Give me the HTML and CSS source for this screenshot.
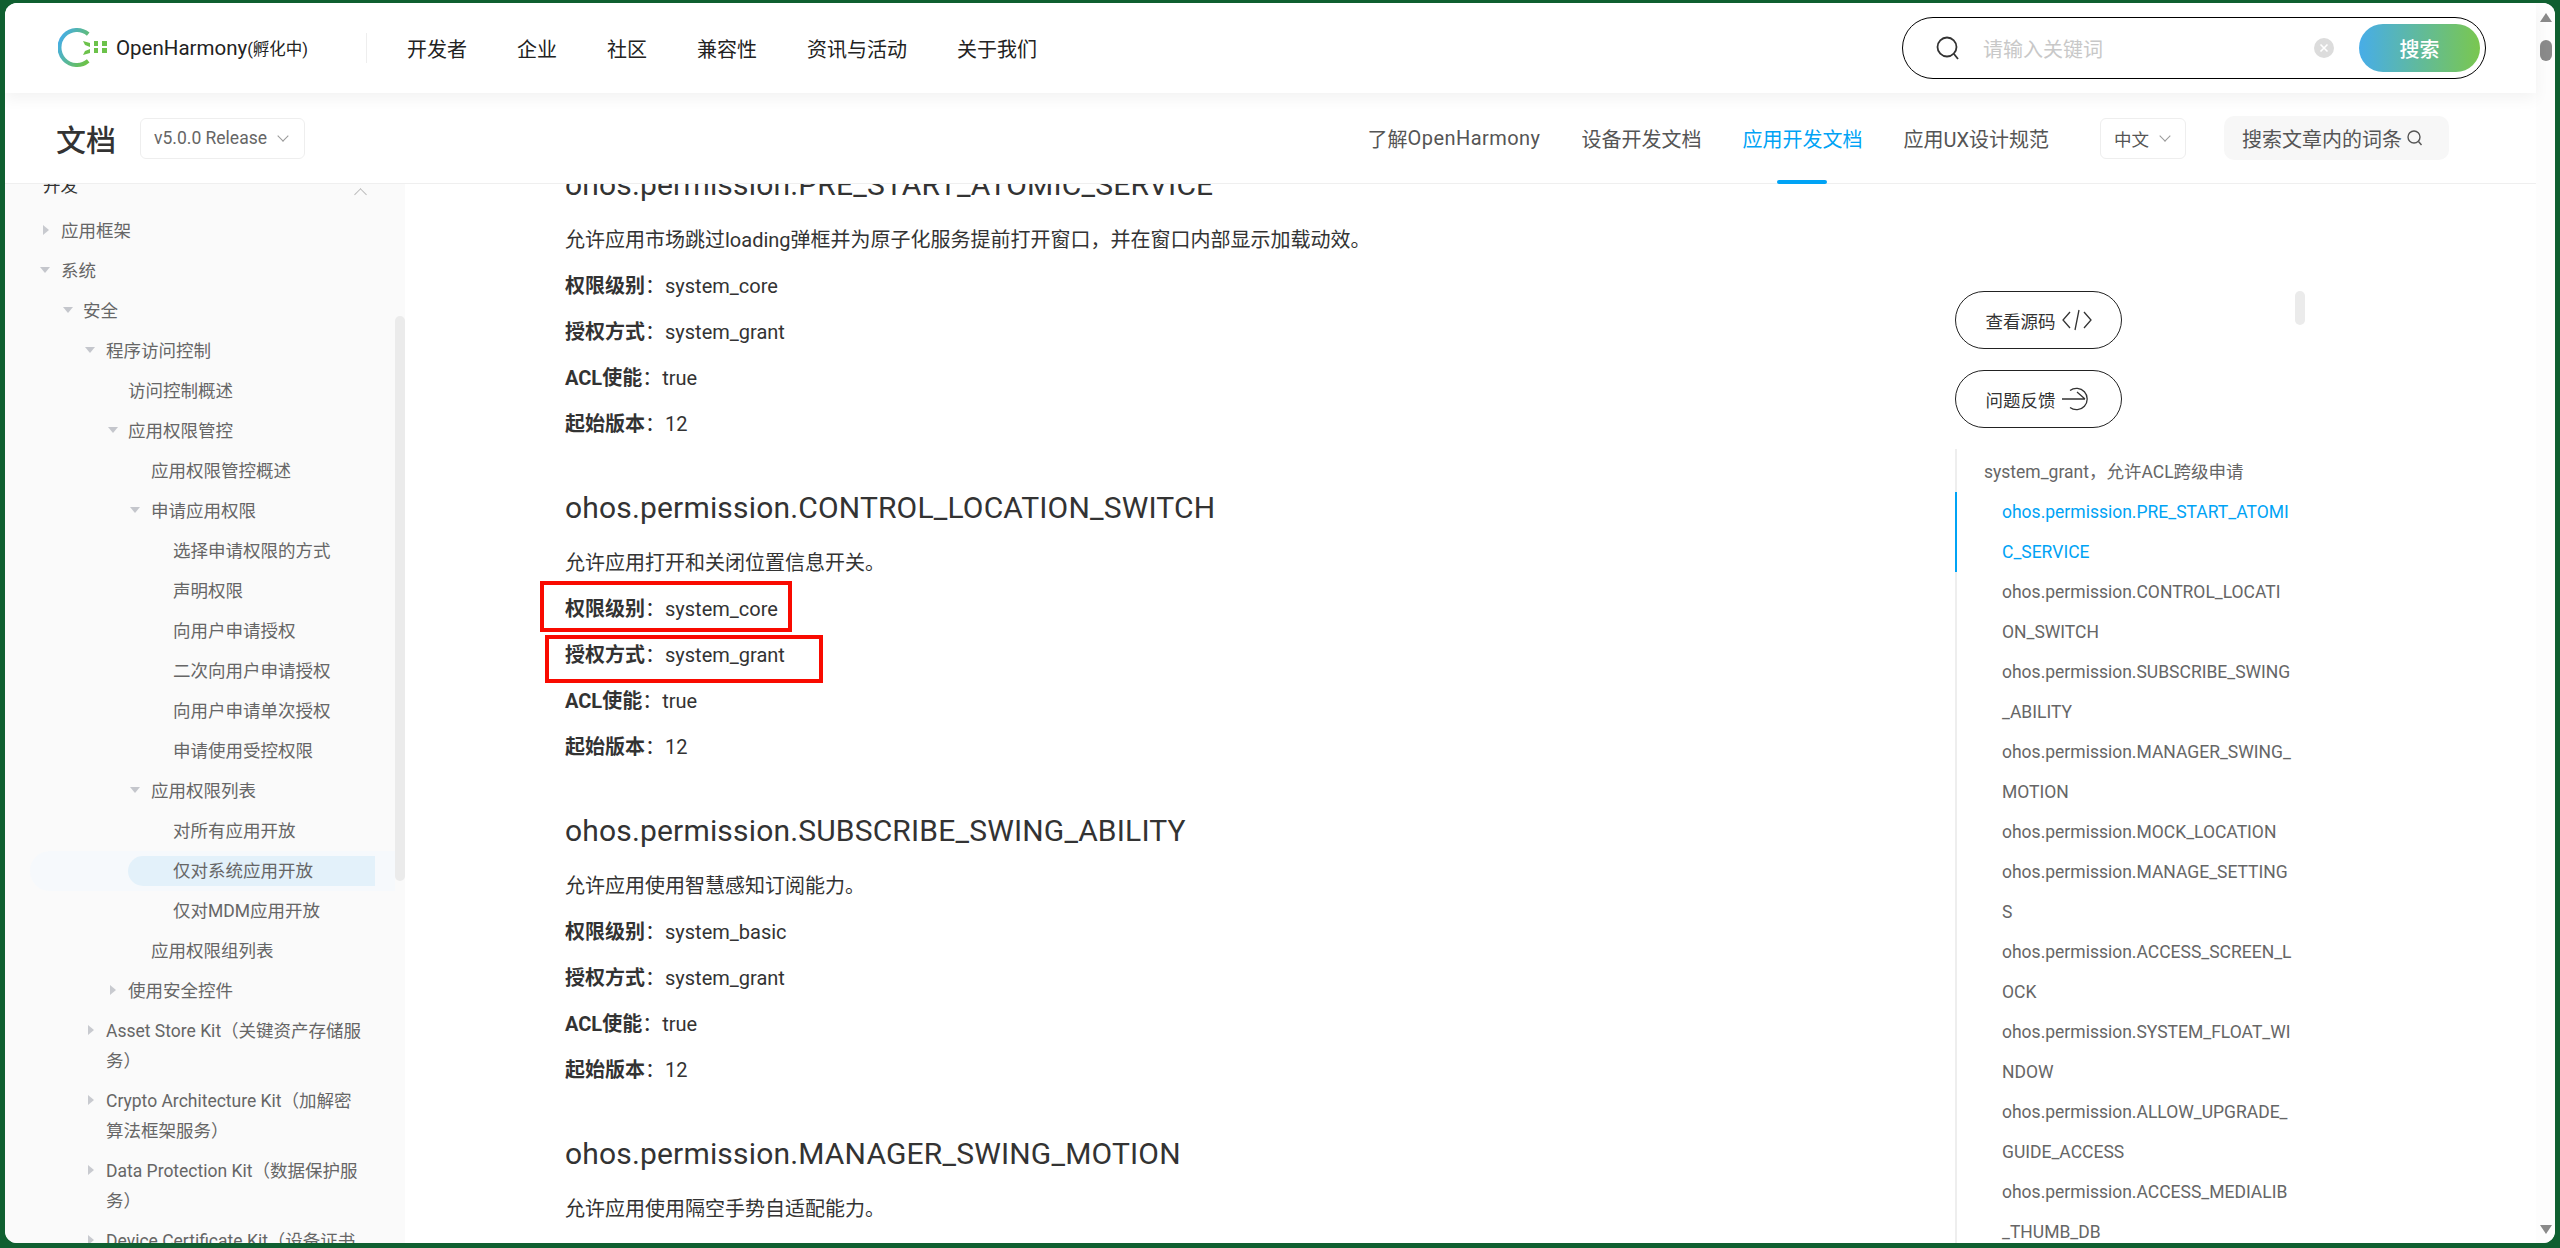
FILE: index.html
```html
<!DOCTYPE html>
<html lang="zh-CN">
<head>
<meta charset="utf-8">
<title>OpenHarmony 文档</title>
<link rel="stylesheet" href="styles.css">
</head>
<body>
<div class="window">
  <div class="page">
    <header class="topbar">
      <a class="logo">
        <svg class="logo-mark" width="50" height="42" viewBox="0 0 50 42">
          <defs>
            <linearGradient id="ring" x1="0" y1="0.2" x2="1" y2="0.8">
              <stop offset="0" stop-color="#45ade8"/>
              <stop offset="1" stop-color="#6cc24a"/>
            </linearGradient>
          </defs>
          <path d="M30.200 7.100A17.500 17.500 0 1 0 30.200 33.900" fill="none" stroke="url(#ring)" stroke-width="4"/>
          <path d="M25 14l7 2v4l-5-2z M25 28l7-2v-4l-5 2z" fill="#6cc24a"/>
          <path d="M36 14h4v5h-4z M36 21h4v5h-4z M44 14h5v5h-5z M44 21h5v5h-5z" fill="#6cc24a"/>
        </svg>
        <span class="logo-text">OpenHarmony<span class="logo-sub">(孵化中)</span></span>
      </a>
      <nav class="mainnav">
        <a>开发者</a><a>企业</a><a>社区</a><a>兼容性</a><a>资讯与活动</a><a>关于我们</a>
      </nav>
      <form class="searchbox">
        <svg class="search-icon" width="26" height="26" viewBox="0 0 26 26"><circle cx="12" cy="12" r="9.500" fill="none" stroke="#333" stroke-width="1.800"/><path d="M19 19l4 5" stroke="#333" stroke-width="1.800" fill="none"/></svg>
        <span class="placeholder">请输入关键词</span>
        <svg class="clear-icon" width="20" height="20" viewBox="0 0 20 20"><circle cx="10" cy="10" r="10" fill="#dcdcdc"/><path d="M6.500 6.500l7 7M13.500 6.500l-7 7" stroke="#fff" stroke-width="1.600"/></svg>
        <span class="search-btn">搜索</span>
      </form>
    </header>
    <div class="docbar">
      <h1 class="doc-title">文档</h1>
      <div class="select select-version">v5.0.0 Release<i class="chev"></i></div>
      <nav class="docnav">
        <a>了解<span class="latin">OpenHarmony</span></a><a>设备开发文档</a><a class="on">应用开发文档</a><a>应用UX设计规范</a>
      </nav>
      <div class="select select-lang">中文<i class="chev"></i></div>
      <div class="wordsearch">搜索文章内的词条<svg width="18" height="18" viewBox="0 0 18 18"><circle cx="8" cy="8" r="6" fill="none" stroke="#555" stroke-width="1.400"/><path d="M12.500 12.500l3 3.500" stroke="#555" stroke-width="1.400"/></svg></div>
    </div>
    <div class="content">
      <aside class="sidebar">
        <ul class="tree">
          <li class="row root">开发<i class="caret-up"></i></li>
          <li class="row l0 closed">应用框架</li>
          <li class="row l0 open">系统</li>
          <li class="row l1 open">安全</li>
          <li class="row l2 open">程序访问控制</li>
          <li class="row l3">访问控制概述</li>
          <li class="row l3 open">应用权限管控</li>
          <li class="row l4">应用权限管控概述</li>
          <li class="row l4 open">申请应用权限</li>
          <li class="row l5">选择申请权限的方式</li>
          <li class="row l5">声明权限</li>
          <li class="row l5">向用户申请授权</li>
          <li class="row l5">二次向用户申请授权</li>
          <li class="row l5">向用户申请单次授权</li>
          <li class="row l5">申请使用受控权限</li>
          <li class="row l4 open">应用权限列表</li>
          <li class="row l5">对所有应用开放</li>
          <li class="row l5 current"><span>仅对系统应用开放</span></li>
          <li class="row l5">仅对MDM应用开放</li>
          <li class="row l4">应用权限组列表</li>
          <li class="row l3 closed">使用安全控件</li>
          <li class="row l2 closed">Asset Store Kit（关键资产存储服务）</li>
          <li class="row l2 closed">Crypto Architecture Kit（加解密算法框架服务）</li>
          <li class="row l2 closed">Data Protection Kit（数据保护服务）</li>
          <li class="row l2 closed">Device Certificate Kit（设备证书服务）</li>
        </ul>
        <div class="side-thumb"></div>
      </aside>
      <main class="article">
        <section class="perm first">
          <h3>ohos.permission.PRE_START_ATOMIC_SERVICE</h3>
          <p>允许应用市场跳过loading弹框并为原子化服务提前打开窗口，并在窗口内部显示加载动效。</p>
          <p><b>权限级别</b>：system_core</p>
          <p><b>授权方式</b>：system_grant</p>
          <p><b>ACL使能</b>：true</p>
          <p><b>起始版本</b>：12</p>
        </section>
        <section class="perm">
          <h3>ohos.permission.CONTROL_LOCATION_SWITCH</h3>
          <p>允许应用打开和关闭位置信息开关。</p>
          <p><b>权限级别</b>：system_core</p>
          <p><b>授权方式</b>：system_grant</p>
          <p><b>ACL使能</b>：true</p>
          <p><b>起始版本</b>：12</p>
        </section>
        <section class="perm">
          <h3>ohos.permission.SUBSCRIBE_SWING_ABILITY</h3>
          <p>允许应用使用智慧感知订阅能力。</p>
          <p><b>权限级别</b>：system_basic</p>
          <p><b>授权方式</b>：system_grant</p>
          <p><b>ACL使能</b>：true</p>
          <p><b>起始版本</b>：12</p>
        </section>
        <section class="perm">
          <h3>ohos.permission.MANAGER_SWING_MOTION</h3>
          <p>允许应用使用隔空手势自适配能力。</p>
        </section>
        <div class="redbox box-a"></div>
        <div class="redbox box-b"></div>
      </main>
      <aside class="outline">
        <a class="pill">查看源码<svg width="30" height="24" viewBox="0 0 30 24"><path d="M8 4l-7 8 7 8M22 4l7 8-7 8M17 2l-4 20" fill="none" stroke="#333" stroke-width="1.300"/></svg></a>
        <a class="pill">问题反馈<svg width="30" height="24" viewBox="0 0 30 24"><path d="M8 3.500A10.700 10.700 0 1 1 8 20.500M0 12h23M15 5l8 7" fill="none" stroke="#333" stroke-width="1.300"/></svg></a>
        <ul class="toc">
          <li class="toc-group">system_grant，允许ACL跨级申请</li>
          <li class="toc-item on">ohos.permission.PRE_START_ATOMIC_SERVICE</li>
          <li class="toc-item">ohos.permission.CONTROL_LOCATI<br>ON_SWITCH</li>
          <li class="toc-item">ohos.permission.SUBSCRIBE_SWING_ABILITY</li>
          <li class="toc-item">ohos.permission.MANAGER_SWING_MOTION</li>
          <li class="toc-item">ohos.permission.MOCK_LOCATION</li>
          <li class="toc-item">ohos.permission.MANAGE_SETTINGS</li>
          <li class="toc-item">ohos.permission.ACCESS_SCREEN_LOCK</li>
          <li class="toc-item">ohos.permission.SYSTEM_FLOAT_WINDOW</li>
          <li class="toc-item">ohos.permission.ALLOW_UPGRADE_GUIDE_ACCESS</li>
          <li class="toc-item">ohos.permission.ACCESS_MEDIALIB_THUMB_DB</li>
        </ul>
        <div class="toc-thumb"></div>
      </aside>
    </div>
  </div>
  <div class="page-scroll">
    <i class="arrow-up"></i>
    <i class="page-thumb"></i>
    <i class="arrow-down"></i>
  </div>
</div>
</body>
</html>
```
FILE: styles.css
```css
* { box-sizing: border-box; }
html, body { height: 100%; }
body {
  margin: 0;
  background: #0f5f30;
  padding: 3px 5px 5px;
  overflow: hidden;
  font-family: Roboto, "Noto Sans CJK SC", sans-serif;
  color: #333;
}
ul { list-style: none; margin: 0; padding: 0; }
a { color: inherit; text-decoration: none; }
.window {
  display: flex;
  height: 1240px;
  background: #fff;
  border-radius: 12px;
  overflow: hidden;
}
.page { flex: 1; min-width: 0; display: flex; flex-direction: column; }
.page-scroll {
  width: 19px;
  background: #fdfdfd;
  display: flex;
  flex-direction: column;
  align-items: center;
  padding: 10px 0 9px;
}
.arrow-up { width: 0; height: 0; border: 6px solid transparent; border-top: 0; border-bottom: 9px solid #8a8a8a; }
.page-thumb { width: 12px; height: 21px; background: #8a8a8a; border-radius: 6px; margin-top: 18px; }
.arrow-down { width: 0; height: 0; border: 6px solid transparent; border-bottom: 0; border-top: 9px solid #8a8a8a; margin-top: auto; }

.topbar {
  height: 90px;
  flex: none;
  display: flex;
  align-items: center;
  position: relative;
  z-index: 2;
  background: #fff;
  box-shadow: 0 6px 14px rgba(0,0,0,.05);
  padding-left: 53px;
}
.logo { display: flex; align-items: center; width: 308px; height: 30px; }
.logo-mark { margin-right: 8px; flex: none; }
.logo-text { font-size: 20.500px; color: #222; white-space: nowrap; }
.logo-sub { font-size: 16.500px; }
.mainnav {
  display: flex;
  gap: 50px;
  height: 30px;
  align-items: center;
  border-left: 1px solid #eee;
  padding-left: 40px;
  font-size: 20px;
  color: #222;
}
.searchbox {
  margin: 0 50px 0 auto;
  width: 584px;
  height: 62px;
  border: 1.500px solid #000;
  border-radius: 31px;
  display: flex;
  align-items: center;
  padding-left: 32px;
}
.placeholder { color: #c8c8c8; font-size: 20px; margin-left: 22px; }
.clear-icon { margin-left: auto; margin-right: 25px; }
.search-btn {
  width: 121px;
  height: 48px;
  margin-right: 5px;
  border-radius: 24px;
  background: linear-gradient(90deg, #47ade8, #7ac74f);
  color: #fff;
  font-size: 20px;
  font-weight: 500;
  display: flex;
  align-items: center;
  justify-content: center;
}

.docbar {
  height: 91px;
  flex: none;
  border-bottom: 1px solid #efefef;
  display: flex;
  align-items: center;
  padding-left: 51px;
  background: #fff;
}
.doc-title { font-size: 30px; font-weight: 500; margin: 0 24px 0 0; color: #333; }
.select {
  height: 41px;
  border: 1px solid #eee;
  border-radius: 6px;
  display: flex;
  align-items: center;
  color: #666;
  background: #fff;
}
.select-version { width: 165px; padding-left: 13px; font-size: 17.500px; }
.select-lang { width: 86px; padding-left: 13px; font-size: 17.500px; margin-left: 51px; color: #555; }
.chev {
  width: 8px; height: 8px;
  border-right: 1px solid #999;
  border-bottom: 1px solid #999;
  transform: rotate(45deg);
  margin: -4px 0 0 12px;
}
.docnav {
  display: flex;
  gap: 41px;
  margin-left: auto;
  align-self: stretch;
  align-items: center;
  font-size: 20px;
  color: #555;
}
.docnav a { position: relative; height: 100%; display: flex; align-items: center; }
.docnav .latin { letter-spacing: .45px; }
.docnav a.on { color: #00a3f5; }
.docnav a.on::after {
  content: "";
  position: absolute;
  left: 35px;
  bottom: -1px;
  width: 50px;
  height: 4px;
  border-radius: 2px;
  background: #00a3f5;
}
.wordsearch {
  width: 225px;
  height: 44px;
  margin: 0 87px 0 38px;
  background: #f7f7f7;
  border-radius: 10px;
  display: flex;
  align-items: center;
  padding-left: 18px;
  gap: 4px;
  font-size: 20px;
  color: #555;
  white-space: nowrap;
}

.content { flex: 1; min-height: 0; display: flex; position: relative; }
.sidebar {
  width: 400px;
  flex: none;
  background: #fafafa;
  position: relative;
  overflow: hidden;
}
.tree { margin-top: -18px; font-size: 17.500px; color: #666; }
.row {
  position: relative;
  margin-left: 25px;
  width: 365px;
  padding: 5px 30px 5px 0;
  line-height: 30px;
}
.root { padding-left: 13px; color: #333; margin-bottom: 5px; }
.l0 { padding-left: 31px; }
.l1 { padding-left: 53px; }
.l2 { padding-left: 76px; }
.l3 { padding-left: 98px; }
.l4 { padding-left: 121px; }
.l5 { padding-left: 143px; }
.open::before, .closed::before {
  content: "";
  position: absolute;
  width: 0; height: 0;
  border: solid transparent;
}
.open::before { top: 16px; border-width: 6px 5px 0; border-top-color: #c4c6cc; margin-left: -22px; }
.closed::before { top: 14px; border-width: 5px 0 5px 6px; border-left-color: #c8cacf; margin-left: -18px; }
.l0.open::before { left: 10px; margin: 0; }
.l0.closed::before { left: 13px; margin: 0; }
.l1.open::before { left: 33px; margin: 0; }
.l2.open::before { left: 55px; margin: 0; }
.l3.open::before { left: 78px; margin: 0; }
.l4.open::before { left: 100px; margin: 0; }
.l2.closed::before { left: 58px; margin: 0; }
.l3.closed::before { left: 80px; margin: 0; }
.current { background: #f6f9fc; border-radius: 20px 0 0 20px; }
.current span {
  display: block;
  margin-left: -45px;
  margin-right: -10px;
  padding-left: 45px;
  background: #e3f1fa;
  border-radius: 15px 0 0 15px;
}
.caret-up {
  position: absolute;
  right: 30px;
  top: 24px;
  width: 9px; height: 9px;
  border-left: 1px solid #bbb;
  border-top: 1px solid #bbb;
  transform: rotate(45deg);
}
.side-thumb {
  position: absolute;
  right: 0;
  top: 132px;
  width: 10px;
  height: 565px;
  background: #ebebeb;
  border-radius: 5px;
}

.article {
  width: 1550px;
  flex: none;
  overflow: hidden;
  position: relative;
  padding-left: 160px;
  color: #333;
}
.perm h3 {
  font-size: 30px;
  font-weight: 400;
  line-height: 40px;
  letter-spacing: .17px;
  margin: 0 0 20px;
}
.perm p {
  font-size: 20px;
  line-height: 30px;
  margin: 0 0 16px;
}
.perm p b { font-weight: 700; }
.perm { margin-bottom: 49px; }
.first { margin-top: -19px; }
.redbox { position: absolute; border: 4px solid #f90a00; }
.box-a { left: 135px; top: 397px; width: 252px; height: 51px; }
.box-b { left: 140px; top: 451px; width: 278px; height: 48px; }

.outline {
  width: 350px;
  padding-top: 107px;
  position: relative;
  overflow: hidden;
  flex: none;
  font-size: 17.500px;
}
.pill {
  width: 167px;
  height: 58px;
  border: 1px solid #222;
  border-radius: 29px;
  display: flex;
  align-items: center;
  justify-content: center;
  gap: 6px;
  margin-bottom: 21px;
  color: #333;
}
.toc { border-left: 2px solid #eee; margin-top: 21px; width: 340px; color: #666; line-height: 40px; height: 900px; padding-top: 3px; }
.toc-group { padding-left: 27px; }
.toc-item { padding-left: 45px; margin-left: -2px; border-left: 2px solid transparent; word-break: break-all; }
.toc-item.on { color: #00a3f5; border-left-color: #00a3f5; }
.toc-thumb {
  position: absolute;
  right: 0;
  top: 107px;
  width: 10px;
  height: 34px;
  background: #ebebeb;
  border-radius: 5px;
}
```
